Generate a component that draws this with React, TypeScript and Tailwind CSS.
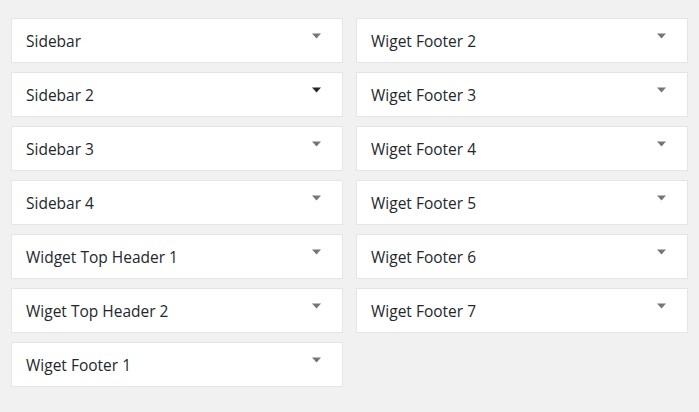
const LEFT = [
  "Sidebar",
  "Sidebar 2",
  "Sidebar 3",
  "Sidebar 4",
  "Widget Top Header 1",
  "Wiget Top Header 2",
  "Wiget Footer 1",
];

const RIGHT = [
  "Wiget Footer 2",
  "Wiget Footer 3",
  "Wiget Footer 4",
  "Wiget Footer 5",
  "Wiget Footer 6",
  "Wiget Footer 7",
];

function Arrow({ dark }: { dark?: boolean }) {
  return (
    <svg width="9" height="6" viewBox="0 0 9 6" className="mt-[-9px]">
      <path d="M0 0.5h9L4.5 5.5z" fill={dark ? "#23282d" : "#72777c"} />
    </svg>
  );
}

function SidebarBox({ name, dark }: { name: string; dark?: boolean }) {
  return (
    <div className="h-[45px] bg-white border border-[#e5e5e5] flex items-center justify-between pl-[14px] pr-[21px]">
      <h2 className="text-[15.5px] font-medium text-[#23282d] pt-[3px]">{name}</h2>
      <Arrow dark={dark} />
    </div>
  );
}

export default function App() {
  return (
    <div
      className="min-h-[412px] bg-[#f1f1f1] px-[11px] pt-[18px] flex gap-[13px]"
      style={{ fontFamily: '"Open Sans", sans-serif' }}
    >
      <div className="w-[332px] flex flex-col gap-[9px]">
        {LEFT.map((n) => (
          <SidebarBox key={n} name={n} dark={n === "Sidebar 2"} />
        ))}
      </div>
      <div className="w-[332px] flex flex-col gap-[9px]">
        {RIGHT.map((n) => (
          <SidebarBox key={n} name={n} />
        ))}
      </div>
    </div>
  );
}
